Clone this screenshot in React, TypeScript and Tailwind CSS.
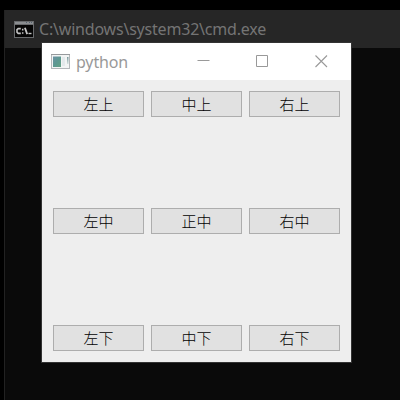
const rows = [
  ["左上", "中上", "右上"],
  ["左中", "正中", "右中"],
  ["左下", "中下", "右下"],
];

function CmdIcon() {
  return (
    <svg className="h-[17px] w-5 shrink-0" viewBox="0 0 20 17" shapeRendering="crispEdges">
      <rect width="20" height="17" fill="#686a6c" />
      <rect x="1" y="1" width="18" height="2" fill="#8b8e91" />
      <rect x="12" y="1" width="1" height="1" fill="#53606c" />
      <rect x="15" y="1" width="1" height="1" fill="#53606c" />
      <rect x="17" y="1" width="1" height="1" fill="#53606c" />
      <rect x="1" y="4" width="18" height="12" fill="#050505" />
      <g fill="none" stroke="#c4c4c4" shapeRendering="auto">
        <path d="M6.8 7.6H4.2L3 8.7V11.2L4.2 12.4H6.8" strokeWidth="1.6" />
        <path d="M8.7 7.8V9.4M8.7 11.2V12.8" strokeWidth="1.5" />
        <path d="M10.9 6.7L13.2 13.1" strokeWidth="1.8" />
        <path d="M14.5 12.5H17.5" strokeWidth="1.4" />
      </g>
    </svg>
  );
}

function AppIcon() {
  return (
    <svg className="h-[15px] w-[19px] shrink-0" viewBox="0 0 19 15">
      <defs>
        <linearGradient id="pane" x1="0" y1="0" x2="1" y2="1">
          <stop offset="0" stopColor="#6d91a5" />
          <stop offset="0.5" stopColor="#5c9891" />
          <stop offset="1" stopColor="#64a184" />
        </linearGradient>
        <linearGradient id="strip" x1="0" y1="0" x2="0" y2="1">
          <stop offset="0" stopColor="#7a979c" />
          <stop offset="1" stopColor="#d5e2df" />
        </linearGradient>
      </defs>
      <rect x="0.5" y="0.5" width="18" height="14" fill="#f2f4f4" stroke="#b4b7ba" />
      <path d="M0 .5H19" stroke="#96999c" />
      <rect x="2" y="2.5" width="8" height="10.5" fill="url(#pane)" />
      <rect x="11" y="3" width="3" height="9" fill="#e3e9eb" />
      <rect x="16" y="3" width="1.5" height="7" fill="url(#strip)" />
    </svg>
  );
}

function WindowControls() {
  return (
    <div className="ml-auto flex items-center gap-[46px] pr-[23px] text-[#999999]">
      <svg className="h-[13px] w-[13px]" viewBox="0 0 13 13" fill="none" stroke="currentColor">
        <path d="M.5 5.5H12.5" />
      </svg>
      <svg className="h-[13px] w-[13px]" viewBox="0 0 13 13" fill="none" stroke="currentColor">
        <path d="M.5 .5H11.5V11.5H.5Z" />
      </svg>
      <svg className="h-[13px] w-[13px]" viewBox="0 0 13 13" fill="none" stroke="currentColor">
        <path d="M.5 .5L12 12M12 .5L.5 12" strokeWidth="1.1" />
      </svg>
    </div>
  );
}

export default function App() {
  return (
    <div className="relative h-[400px] w-[400px] overflow-hidden bg-black pt-2.5 pl-1 font-['Noto_Sans','Open_Sans',sans-serif]">
      <div className="flex h-[390px] flex-col border-l border-[#222222] bg-[#0a0a0a]">
        <div className="flex h-[38px] items-center gap-[5px] bg-[#262626] pl-[9px]">
          <CmdIcon />
          <span className="text-[16px] leading-5 tracking-[-0.2px] whitespace-nowrap text-[#747474]">
            C:\windows\system32\cmd.exe
          </span>
        </div>
      </div>
      <div className="absolute top-[42px] left-[41px] flex h-[321px] w-[311px] flex-col border border-[#333333] bg-[#eeeeee]">
        <div className="flex h-[37px] items-center bg-white pl-[9px]">
          <AppIcon />
          <span className="ml-1.5 text-[16px] leading-5 tracking-[-0.15px] text-[#999999]">python</span>
          <WindowControls />
        </div>
        <div className="grid flex-1 grid-cols-3 content-between gap-x-[7px] p-[11px]">
          {rows.flat().map((label) => (
            <button
              key={label}
              className="flex h-[26px] items-center justify-center border border-[#adadad] bg-[#e1e1e1] pb-0.5 font-['Noto_Sans_CJK_SC',sans-serif] text-[15px] leading-none font-light text-black"
            >
              {label}
            </button>
          ))}
        </div>
      </div>
    </div>
  );
}
